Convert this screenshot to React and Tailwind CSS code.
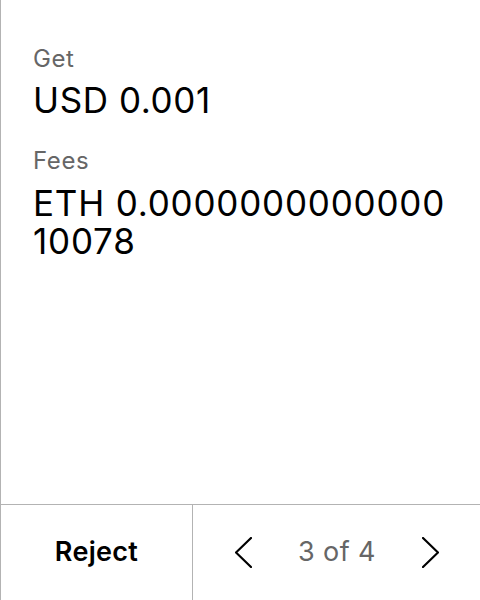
function Chevron({ dir }) {
    const points = dir === 'left' ? '16,1 1,15.5 16,30' : '1,1 16,15.5 1,30';
    return (
        <svg width="17" height="31" viewBox="0 0 17 31" fill="none" stroke="black" strokeWidth="2.2" strokeLinecap="round" strokeLinejoin="miter">
            <polyline points={points} />
        </svg>
    );
}

export default function App() {
    return (
        <div
            className="w-[480px] h-[600px] flex flex-col bg-white border-l border-[#b3b3b3] text-black"
            style={{ fontFamily: 'Inter, "Noto Sans", sans-serif' }}
        >
            <div className="flex-1 pl-8 pr-4 pt-[44px]">
                <div className="text-[24px] leading-[30px] tracking-[0.6px] text-[#666666]">Get</div>
                <div className="text-[35px] leading-[40px] tracking-[0.6px] mt-[6px]">USD 0.001</div>
                <div className="text-[24px] leading-[30px] tracking-[0.6px] text-[#666666] mt-[26px]">Fees</div>
                <div className="text-[35px] leading-[38px] tracking-[0.8px] mt-[8px]">
                    ETH 0.0000000000000
                    <br />
                    10078
                </div>
            </div>
            <div className="h-[96px] flex border-t border-[#b3b3b3]">
                <button className="w-[192px] border-r border-[#b3b3b3] text-[27px] font-semibold tracking-[0.3px]">Reject</button>
                <div className="flex-1 flex items-center pl-[42px]">
                    <Chevron dir="left" />
                    <span className="ml-[46px] w-[78px] text-[27px] tracking-[0.4px] text-[#666666]">3 of 4</span>
                    <span className="ml-[46px]">
                        <Chevron dir="right" />
                    </span>
                </div>
            </div>
        </div>
    );
}
